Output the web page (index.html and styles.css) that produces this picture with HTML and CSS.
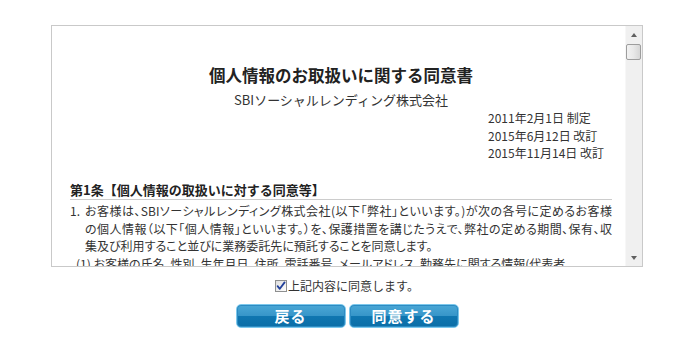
FILE: index.html
```html
<!DOCTYPE html>
<html lang="ja">
<head>
<meta charset="utf-8">
<title>個人情報のお取扱いに関する同意書</title>
<link rel="stylesheet" href="styles.css">
</head>
<body>
<div class="page">
  <div class="doc-box">
    <div class="doc-content">
      <h1 class="doc-title">個人情報のお取扱いに関する同意書</h1>
      <p class="doc-company">SBIソーシャルレンディング株式会社</p>
      <div class="doc-dates">
        <div>2011年2月1日 制定</div>
        <div>2015年6月12日 改訂</div>
        <div>2015年11月14日 改訂</div>
      </div>
      <h2 class="article-title">第1条【個人情報の取扱いに対する同意等】</h2>
      <div class="clause">
        <span class="clause-num">1.</span>
        <div class="clause-body">
          <span class="ln jl">お客様は、SBIソーシャルレンディング株式会社(以下「弊社」といいます。)が次の各号に定めるお客様</span>
          <span class="ln jl">の個人情報（以下「個人情報」といいます。）を、保護措置を講じたうえで、弊社の定める期間、保有、収</span>
          <span class="ln">集及び利用すること並びに業務委託先に預託することを同意します。</span>
          <span class="ln sub">(1) お客様の氏名、性別、生年月日、住所、電話番号、メールアドレス、勤務先に関する情報(代表者</span>
        </div>
      </div>
    </div>
    <div class="scrollbar">
      <div class="sb-btn"><span class="arrow-up"></span></div>
      <div class="sb-track"><div class="sb-thumb"></div></div>
      <div class="sb-btn"><span class="arrow-down"></span></div>
    </div>
  </div>

  <label class="agree">
    <span class="checkbox">
      <svg width="12" height="12" viewBox="0 0 12 12">
        <defs>
          <linearGradient id="cbg" x1="0" y1="0" x2="1" y2="1">
            <stop offset="0" stop-color="#dcdcdc"/>
            <stop offset="1" stop-color="#ffffff"/>
          </linearGradient>
        </defs>
        <rect x="0.5" y="0.5" width="11" height="11" fill="url(#cbg)" stroke="#8e8f8f"/>
        <path d="M2.6 6.2 L4.8 8.8 L9.6 2.4" fill="none" stroke="#21409a" stroke-width="1.8" stroke-linejoin="round" stroke-linecap="round"/>
      </svg>
    </span>
    <span class="agree-text">上記内容に同意します。</span>
  </label>

  <div class="buttons">
    <button class="btn" type="button">戻る</button>
    <button class="btn" type="button">同意する</button>
  </div>
</div>
</body>
</html>
```

FILE: styles.css
```css
html, body {
  margin: 0;
  padding: 0;
  background: #ffffff;
}
body {
  font-family: "Noto Sans CJK JP", "Noto Sans", sans-serif;
  color: #333333;
  font-size: 12px;
}
.page {
  padding-top: 25px;
  display: flex;
  flex-direction: column;
  align-items: center;
}
.doc-box {
  box-sizing: border-box;
  width: 592px;
  height: 242px;
  border: 1px solid #c9c9c9;
  display: flex;
  overflow: hidden;
}
.doc-content {
  flex: 1;
  min-width: 0;
  padding: 38px 13px 0 18px;
  overflow: hidden;
}
.doc-title {
  margin: 0;
  font-size: 16.5px;
  line-height: 22px;
  font-weight: bold;
  text-align: center;
  color: #222;
}
.doc-company {
  margin: 5px 0 0;
  font-size: 13px;
  line-height: 18px;
  text-align: center;
}
.doc-dates {
  width: max-content;
  margin-left: auto;
  margin-right: 8px;
  line-height: 17.5px;
  font-size: 12px;
}
.article-title {
  margin: 19.5px 0 0;
  font-size: 13px;
  line-height: 18px;
  font-weight: bold;
  border-bottom: 1px solid #cccccc;
  color: #222;
}
.clause {
  margin-top: 2px;
  display: flex;
  line-height: 17.5px;
  font-feature-settings: "palt";
}
.clause-num {
  width: 15px;
  flex: none;
}
.clause-body {
  flex: 1;
  min-width: 0;
}
.ln {
  display: block;
  white-space: nowrap;
}
.jl {
  text-align: justify;
  text-align-last: justify;
}
.sub {
  margin-left: -9px;
}
.scrollbar {
  flex: none;
  width: 17px;
  display: flex;
  flex-direction: column;
  background: #f0f0f0;
  border-left: 1px solid #f7f7f7;
  box-sizing: border-box;
}
.sb-btn {
  height: 17px;
  flex: none;
  display: flex;
  align-items: center;
  justify-content: center;
}
.arrow-up {
  width: 0;
  height: 0;
  border-left: 3.5px solid transparent;
  border-right: 3.5px solid transparent;
  border-bottom: 4px solid #606060;
}
.arrow-down {
  width: 0;
  height: 0;
  border-left: 3.5px solid transparent;
  border-right: 3.5px solid transparent;
  border-top: 4px solid #606060;
}
.sb-track {
  flex: 1;
  padding-top: 1px;
}
.sb-thumb {
  box-sizing: border-box;
  width: 15px;
  height: 16px;
  margin-left: 0;
  border: 1px solid #9d9d9d;
  border-radius: 2px;
  background: linear-gradient(to right, #f2f2f2 0%, #e8e8e8 50%, #d6d6d6 100%);
}
.agree {
  margin-top: 10px;
  display: flex;
  align-items: center;
  height: 18px;
  font-size: 12px;
  line-height: 18px;
}
.checkbox {
  display: flex;
  width: 12px;
  height: 12px;
  margin-right: 1px;
}
.buttons {
  margin-top: 9px;
  display: flex;
  gap: 3px;
}
.btn {
  box-sizing: border-box;
  width: 110px;
  height: 24px;
  padding: 0;
  border: 1px solid #7cc8ec;
  border-radius: 5px;
  background: linear-gradient(to bottom, #4aa7d6 0%, #3796c9 48%, #0f76b0 52%, #0b6ea7 100%);
  color: #ffffff;
  font-family: "Noto Sans CJK JP", "Noto Sans", sans-serif;
  font-size: 15px;
  font-weight: bold;
  line-height: 22px;
  letter-spacing: 1px;
  box-shadow: inset 0 0 0 1px #2d8bc2;
}
```
